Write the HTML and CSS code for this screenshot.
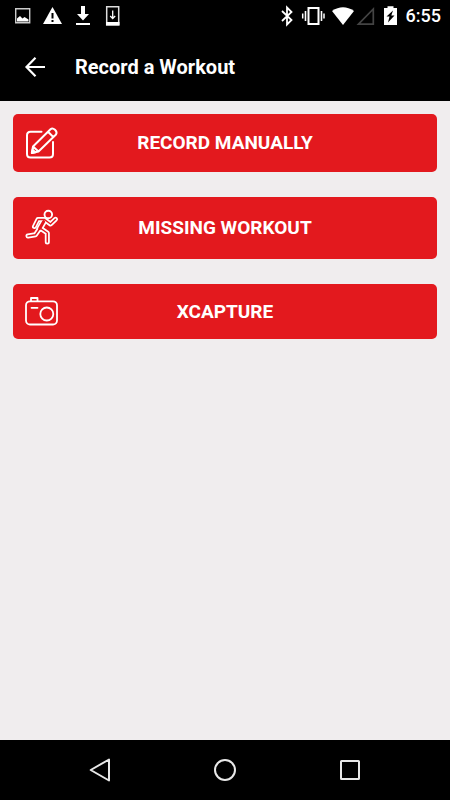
FILE: index.html
```html
<!DOCTYPE html>
<html lang="en">
<head>
<meta charset="utf-8">
<meta name="viewport" content="width=device-width, initial-scale=1">
<title>Record a Workout</title>
<link rel="stylesheet" href="styles.css">
</head>
<body>
<div class="status">
  <div class="status-left">
    <svg width="20" height="20" viewBox="0 0 20 20"><path d="M2.700 2.800h14v14h-14z" fill="none" stroke="#ccc" stroke-width="1.400"/><path d="M4 15.500v-3l3-2.500 2.500 2.500 2-1.500 4 2.500v2z" fill="#fff"/></svg>
    <svg width="20" height="20" viewBox="0 0 20 20"><path d="M9.500 1l9.500 17H0z" fill="#fff"/><path d="M9.500 7v5.500M9.500 14v2" stroke="#000" stroke-width="2"/></svg>
    <svg width="20" height="20" viewBox="0 0 20 20"><path d="M8 0h4v8h4l-6 6.500L4 8h4zM3 17h14v2H3z" fill="#fff"/></svg>
    <svg width="20" height="20" viewBox="0 0 20 20"><path d="M3.700.700h12v18h-12z" fill="none" stroke="#ddd" stroke-width="1.500"/><path d="M3 16h13.500v3.500H3z" fill="#fff"/><path d="M9.700 4.500V12M7.200 10l2.500 2.500 2.500-2.500" fill="none" stroke="#fff" stroke-width="1.300"/></svg>
  </div>
  <div class="status-right">
    <svg width="14" height="20" viewBox="0 0 14 20"><path d="M2 5l9.500 9L7 18.500v-17L11.500 6 2 15" fill="none" stroke="#fff" stroke-width="1.800"/></svg>
    <svg width="22" height="20" viewBox="0 0 22 20"><path d="M6.500 2h10v16h-10z" fill="none" stroke="#fff" stroke-width="2"/><path d="M3.500 5v10M19.500 5v10" stroke="#fff" stroke-width="1.600"/><path d="M.7 7.500v5M22 7.500v5" stroke="#fff" stroke-width="1.500"/></svg>
    <svg width="43" height="20" viewBox="0 0 43 20"><path d="M0 5Q11-2.500 22 5L11 19z" fill="#fff"/><path d="M26.500 18.200L41.300 3v15.200z" fill="none" stroke="#444" stroke-width="1.700"/></svg>
    <svg width="15" height="20" viewBox="0 0 15 20"><path d="M1 2h3.500V.3h6V2H14v17H1z" fill="#fff"/><path d="M10 4.500L3.500 10.500h3L5 16.500 11.500 9.500H8.300z" fill="#000"/></svg>
    <time>6:55</time>
  </div>
</div>
<header class="appbar">
  <button class="back" type="button" aria-label="Back"><svg width="20" height="20" viewBox="0 0 20 20"><path d="M20 10H1.500M10.500.800L1.500 10l9 9.200" fill="none" stroke="#fff" stroke-width="2.200"/></svg></button>
  <h1>Record a Workout</h1>
</header>
<main class="actions">
  <button class="action" type="button">
    <svg width="33" height="32" viewBox="0 0 33 32" fill="none" stroke="#fff" stroke-width="2" stroke-linejoin="round" stroke-linecap="round"><path d="M16.500 4.800H5.500Q2 4.800 2 8.300V27Q2 30.500 5.500 30.500H24.500Q28 30.500 28 27V15"/><path d="M6.800 26L8 19.500 25.500 2.200Q27.500.500 30 2.800T31 7.500L13.500 24.500zM8 19.500L13.500 24.500M23 4.700L28.300 10"/><path d="M7 26l.6-3.300 2.700 2.500z" fill="#fff"/></svg>
    <span>RECORD MANUALLY</span>
  </button>
  <button class="action" type="button">
    <svg width="33" height="36" viewBox="0 0 33 36" fill="none" stroke-linejoin="round" stroke-linecap="round">
      <g stroke="#fff" stroke-width="5"><path d="M9.500 16.500L13 9.500H19.500L25.500 14 30.500 9.300M3 26L10.500 24.700 15 18 22.300 23V32"/><path d="M18.700 11.500L14.700 18.500" stroke-width="6.500"/></g>
      <g class="limb-core"><path d="M9.500 16.500L13 9.500H19.500L25.500 14 30.500 9.300M3 26L10.500 24.700 15 18 22.300 23V32"/><path d="M18.700 11.500L14.700 18.500" stroke-width="3"/></g>
      <circle class="head" cx="23.300" cy="4.500" r="3.800" stroke="#fff" stroke-width="1.900"/>
    </svg>
    <span>MISSING WORKOUT</span>
  </button>
  <button class="action" type="button">
    <svg width="33" height="29" viewBox="0 0 33 29" fill="none" stroke="#fff" stroke-width="1.800" stroke-linejoin="round" stroke-linecap="round"><rect x="1" y="4.300" width="31" height="23.200" rx="4"/><path d="M6 4V1h6.500v3M6.500 10.800h6"/><circle cx="21.800" cy="17" r="6.500"/></svg>
    <span>XCAPTURE</span>
  </button>
</main>
<nav class="navbar">
  <button type="button" aria-label="Back"><svg width="24" height="24" viewBox="0 0 24 24"><path d="M21 1.500v21L2.700 12z"/></svg></button>
  <button type="button" aria-label="Home"><svg width="24" height="24" viewBox="0 0 24 24"><circle cx="12" cy="12" r="10"/></svg></button>
  <button type="button" aria-label="Recent apps"><svg width="24" height="24" viewBox="0 0 24 24"><rect x="3" y="3" width="18" height="18" rx="0.500"/></svg></button>
</nav>
</body>
</html>
```
FILE: styles.css
```css
* {
  box-sizing: border-box;
}

body {
  margin: 0;
  min-height: 100vh;
  display: flex;
  flex-direction: column;
  background: #f0edee;
  color: #fff;
  font-family: Roboto, "Liberation Sans", sans-serif;
}

button {
  border: 0;
  padding: 0;
  background: none;
  color: inherit;
  font: inherit;
  cursor: pointer;
}

svg {
  display: block;
  flex: none;
  overflow: visible;
}

.status {
  display: flex;
  justify-content: space-between;
  align-items: center;
  height: 32px;
  padding: 0 9px 0 13px;
  background: #000;
}

.status-left,
.status-right {
  display: flex;
  align-items: center;
}

.status-left {
  gap: 10px;
}

.status-right {
  gap: 8px;
  font-size: 18px;
  font-weight: 500;
  line-height: 20px;
}

.appbar {
  display: flex;
  align-items: center;
  gap: 30px;
  height: 69px;
  padding: 0 25px;
  background: #000;
}

.appbar h1 {
  margin: 0;
  font-size: 20px;
  line-height: 24px;
  font-weight: 700;
}

.actions {
  flex: 1;
  display: flex;
  flex-direction: column;
  gap: 25px;
  padding: 13px;
}

.action {
  display: grid;
  grid-template-columns: 33px 1fr 33px;
  align-items: center;
  padding: 13px 12px;
  border-radius: 5px;
  background: #e3191e;
  font-size: 19px;
  line-height: 24px;
  font-weight: 700;
}

.limb-core {
  stroke: #e3191e;
  stroke-width: 1.500px;
}

.head {
  fill: #e3191e;
}

.navbar {
  display: flex;
  justify-content: center;
  align-items: center;
  gap: 101px;
  height: 60px;
  background: #000;
}

.navbar svg {
  fill: none;
  stroke: #e8e8e8;
  stroke-width: 2;
  stroke-linejoin: round;
}
```
